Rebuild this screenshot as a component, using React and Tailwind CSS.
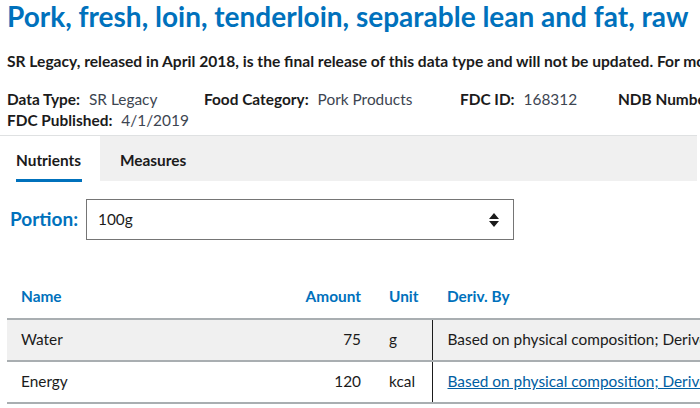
const info = [
  { label: 'Data Type:', value: 'SR Legacy', w: 'w-[197px]' },
  { label: 'Food Category:', value: 'Pork Products', w: 'w-[256px]' },
  { label: 'FDC ID:', value: '168312', w: 'w-[158px]' },
  { label: 'NDB Number:', value: '10060', w: 'w-[160px]' },
]

const rows = [
  { name: 'Water', amount: '75', unit: 'g', deriv: 'Based on physical composition; Derived from', link: false },
  { name: 'Energy', amount: '120', unit: 'kcal', deriv: 'Based on physical composition; Derived from', link: true },
]

export default function App() {
  return (
    <div className="w-[700px] h-[408px] overflow-hidden bg-white text-[#1b1b1b] font-['Lato',sans-serif]">
      <h1 className="pl-[7px] pt-[1px] text-[28px] leading-[30px] font-bold text-[#0071bc] whitespace-nowrap">
        Pork, fresh, loin, tenderloin, separable lean and fat, raw
      </h1>
      <p className="pl-[7px] mt-[20px] text-[15.6px] leading-[20px] font-bold whitespace-nowrap overflow-hidden">
        SR Legacy, released in April 2018, is the final release of this data type and will not be updated. For more
      </p>
      <div className="pl-[7px] mt-[18px] flex flex-wrap w-[780px] text-[15.4px] leading-[21px]">
        {info.map(i => (
          <div key={i.label} className={`${i.w} whitespace-nowrap`}>
            <span className="font-bold mr-[9px]">{i.label}</span>
            <span className="text-[#3d4551]">{i.value}</span>
          </div>
        ))}
        <div className="w-[197px] whitespace-nowrap">
          <span className="font-bold mr-[9px]">FDC Published:</span>
          <span className="text-[#3d4551]">4/1/2019</span>
        </div>
      </div>

      <div className="mt-[4px] border-t border-[#dfe1e2] flex w-[697px]">
        <div className="w-[100px] h-[45px] flex flex-col items-start pl-[16px]">
          <span className="mt-[14px] text-[15.4px] leading-[20px] font-bold">Nutrients</span>
          <span className="mt-auto mb-[-1px] h-[3px] w-[66px] bg-[#0071bc]" />
        </div>
        <div className="flex-1 h-[45px] bg-[#f0f0f0] pl-[20px] pt-[14px] text-[15.4px] leading-[20px] font-bold">
          Measures
        </div>
      </div>

      <div className="mt-[18px] flex items-center pl-[10px]">
        <span className="text-[19px] font-bold text-[#0071bc] w-[76px]">Portion:</span>
        <div className="w-[428px] h-[41px] border border-[#757575] flex items-center justify-between pl-[11px] pr-[14px] text-[15.4px]">
          <span>100g</span>
          <svg width="10" height="14" viewBox="0 0 10 14">
            <path d="M5 0 L10 6 L0 6 Z M0 8 L10 8 L5 14 Z" fill="#1b1b1b" />
          </svg>
        </div>
      </div>

      <table className="mt-[45px] ml-[7px] w-[710px] text-[15.4px] border-collapse table-fixed">
        <thead>
          <tr className="text-[#0071bc]">
            <th className="text-left pl-[14px] h-[34px] align-top font-bold w-[250px]">Name</th>
            <th className="text-right pr-[7px] align-top font-bold w-[111px]">Amount</th>
            <th className="text-left pl-[21px] align-top font-bold w-[64px]">Unit</th>
            <th className="text-left pl-[15px] align-top font-bold">Deriv. By</th>
          </tr>
        </thead>
        <tbody>
          {rows.map((r, i) => (
            <tr key={r.name} className={`border-t-2 border-b-2 border-[#a9aeb1] ${i === 0 ? 'bg-[#f0f0f0]' : 'bg-white'}`}>
              <td className="pl-[14px] h-[42px]">{r.name}</td>
              <td className="text-right pr-[7px]">{r.amount}</td>
              <td className="pl-[21px]">{r.unit}</td>
              <td className="pl-[15px] border-l border-[#1b1b1b] whitespace-nowrap overflow-hidden">
                {r.link ? <span className="text-[#005ea2] underline">{r.deriv}</span> : r.deriv}
              </td>
            </tr>
          ))}
        </tbody>
      </table>
    </div>
  )
}
